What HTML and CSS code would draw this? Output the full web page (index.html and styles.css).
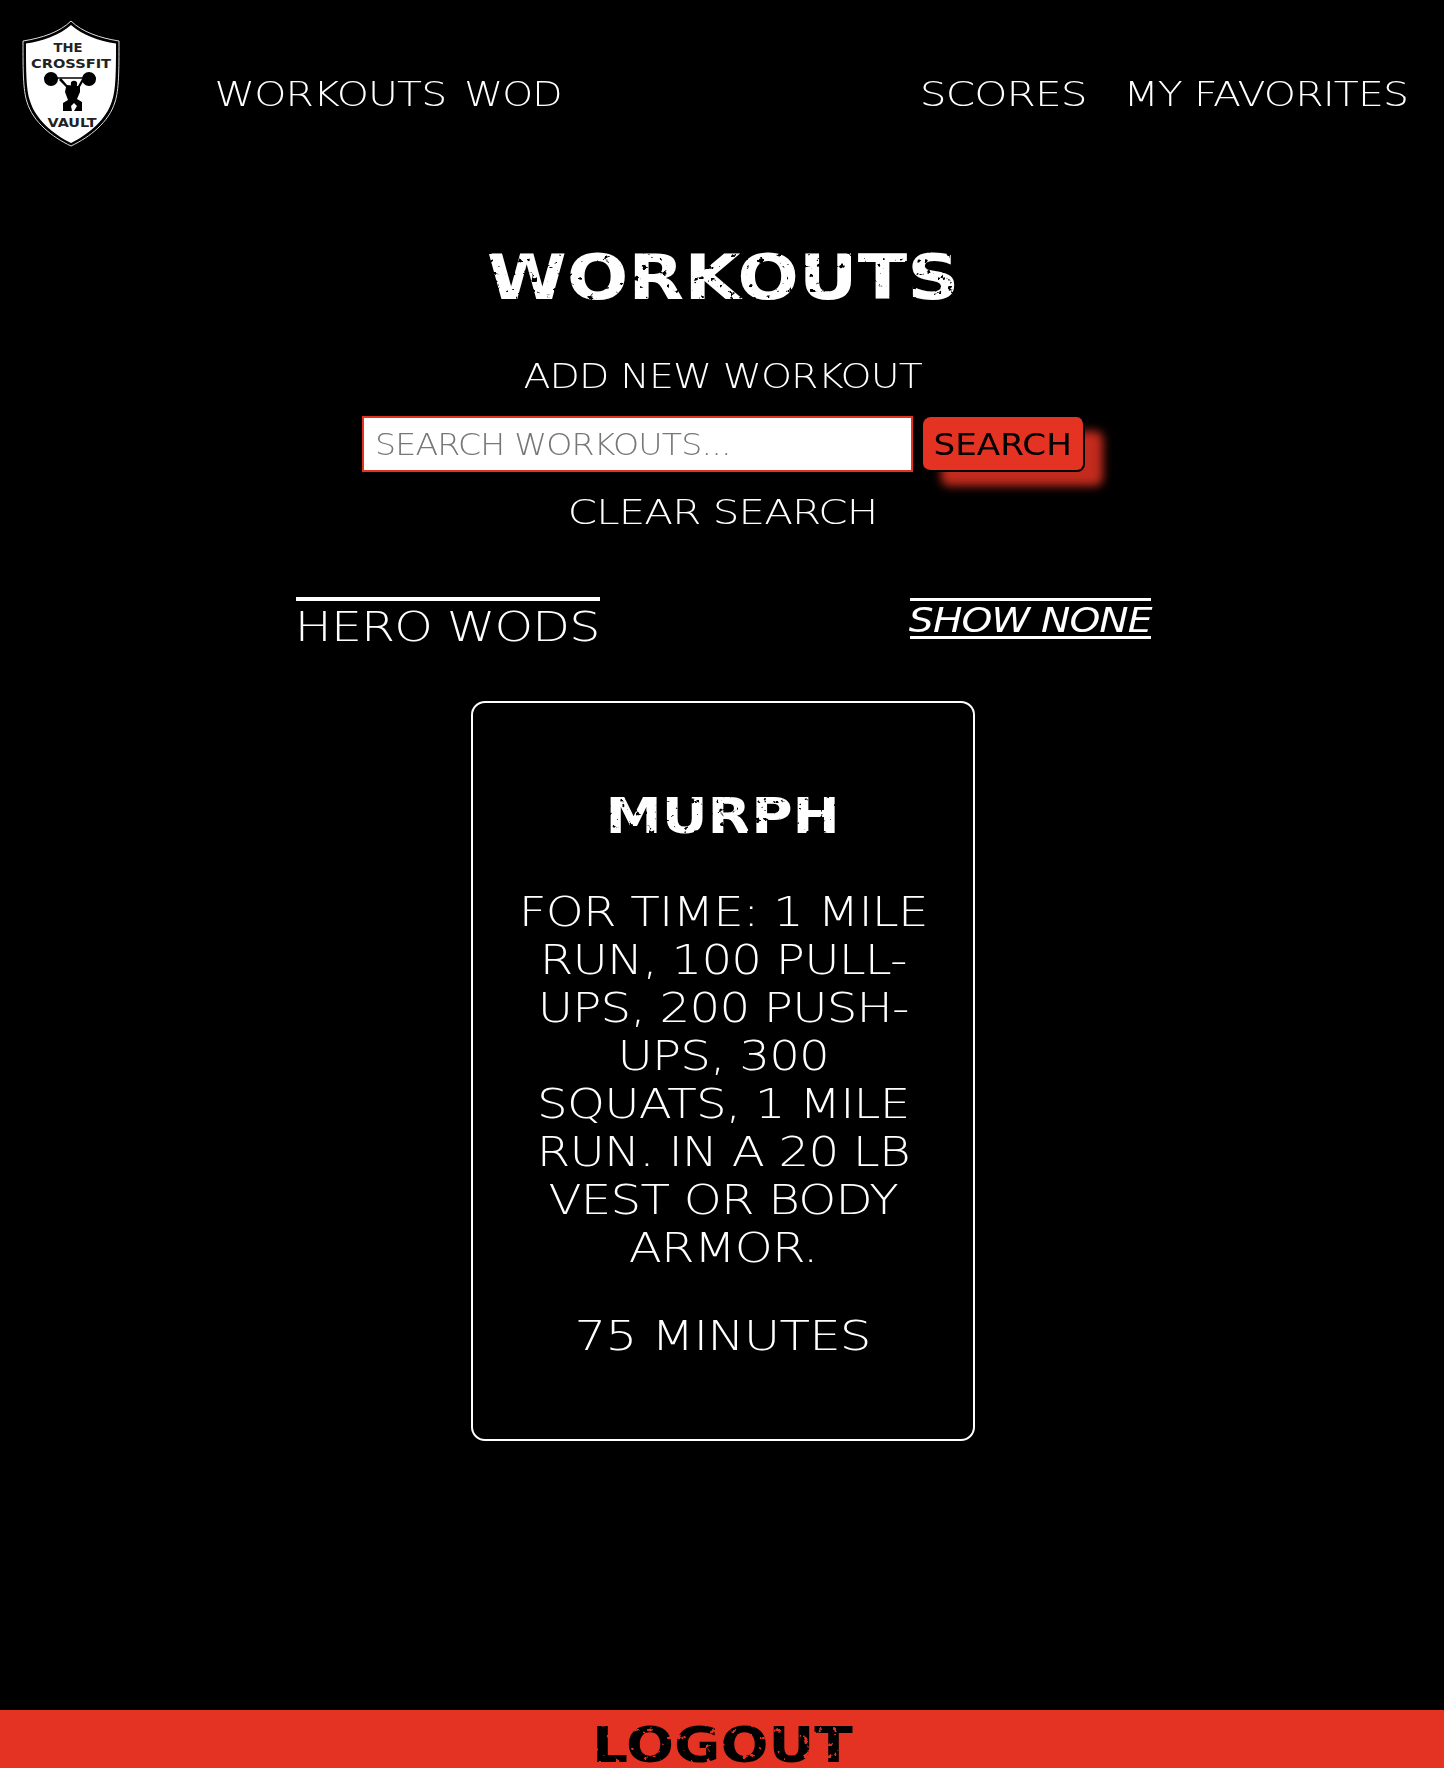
FILE: index.html
```html
<!DOCTYPE html>
<html>
<head>
	<meta charset="utf-8">
	<meta name="viewport" content="width=device-width, initial-scale=1">
	<title>The CrossFit Vault</title>
	<link rel="stylesheet" href="styles.css">
</head>
<body>
	<svg class="filters" width="0" height="0">
		<filter id="distress" x="0" y="0" width="100%" height="100%">
			<feTurbulence type="fractalNoise" baseFrequency="0.16" numOctaves="3" seed="7"/>
			<feColorMatrix values="0 0 0 0 0  0 0 0 0 0  0 0 0 0 0  0 0 0 -14 10.4"/>
			<feComposite in="SourceGraphic" operator="in"/>
		</filter>
	</svg>

	<header class="topbar">
		<svg class="logo" viewBox="0 0 142 165" width="142" height="165">
			<path d="M71 21 C60 32 42 38 23 41 C23 70 23 90 27 102 C33 122 52 137 71 146 C90 137 109 122 115 102 C119 90 119 70 119 41 C100 38 82 32 71 21 Z" fill="#000" stroke="#ddd" stroke-width="1"/>
			<path d="M71 25 C60 35 43 41 26 43.500 C26 70 26 90 30 101 C36 120 53 134 71 143 C89 134 106 120 112 101 C116 90 116 70 116 43.500 C99 41 82 35 71 25 Z" fill="#fff"/>
			<text class="logo-text" x="68" y="52" text-anchor="middle" textLength="29" lengthAdjust="spacingAndGlyphs">THE</text>
			<text class="logo-text" x="71" y="68" text-anchor="middle" textLength="80" lengthAdjust="spacingAndGlyphs">CROSSFIT</text>
			<text class="logo-text" x="72" y="127" text-anchor="middle" textLength="49" lengthAdjust="spacingAndGlyphs">VAULT</text>
			<path d="M44 78 H96" stroke="#000" stroke-width="1.500"/>
			<circle cx="51" cy="79" r="7"/>
			<circle cx="89" cy="79" r="7"/>
			<circle cx="74" cy="84" r="3.200"/>
			<path d="M59 80 L66 87 L65 92 L68 100 L63 103 L63 111 L72 111 L71 106 L74 103 L77 106 L74 111 L82 111 L82 102 L77 99 L80 92 L80 87 L84 80 L82 79 L78 86 L67 85 L61 78 Z"/>
		</svg>
		<nav class="nav-left">
			<a class="nav-link" href="#"><span class="wide">WORKOUTS</span></a>
			<a class="nav-link nav-wod" href="#"><span class="wide">WOD</span></a>
		</nav>
		<nav class="nav-right">
			<a class="nav-link nav-scores" href="#"><span class="wide">SCORES</span></a>
			<a class="nav-link" href="#"><span class="wide">MY FAVORITES</span></a>
		</nav>
	</header>

	<main class="content">
		<h1 class="page-title"><span class="wide-heavy">WORKOUTS</span></h1>
		<a class="add-link" href="#"><span class="wide">ADD NEW WORKOUT</span></a>

		<form class="search-form">
			<div class="search-input"><span class="wide-left">SEARCH WORKOUTS...</span></div>
			<button class="search-btn" type="button"><span class="wide">SEARCH</span></button>
		</form>
		<a class="clear-link" href="#"><span class="wide">CLEAR SEARCH</span></a>

		<div class="filter-row">
			<div class="filter-name"><span class="wide">HERO WODS</span></div>
			<div class="filter-toggle"><span class="wide">SHOW NONE</span></div>
		</div>

		<section class="card">
			<h2 class="card-title"><span class="wide-heavy">MURPH</span></h2>
			<p class="card-desc"><span class="wide">FOR TIME: 1 MILE<br>RUN, 100 PULL-<br>UPS, 200 PUSH-<br>UPS, 300<br>SQUATS, 1 MILE<br>RUN. IN A 20 LB<br>VEST OR BODY<br>ARMOR.</span></p>
			<p class="card-time"><span class="wide">75 MINUTES</span></p>
		</section>
	</main>

	<footer class="logout-bar"><span class="wide-heavy">LOGOUT</span></footer>
</body>
</html>
```
FILE: styles.css
```css
* {
	box-sizing: border-box;
}
html, body {
	margin: 0;
	height: 100%;
}
body {
	min-height: 1768px;
	display: flex;
	flex-direction: column;
	background-color: #000;
	color: #fff;
	font-family: "DejaVu Sans", sans-serif;
	font-weight: 200;
	letter-spacing: -0.045em;
}
a {
	color: #fff;
	text-decoration: none;
}
.filters {
	position: absolute;
}

/* stretched lettering, the installed fonts are all too narrow */
.wide, .wide-heavy, .wide-left {
	display: inline-block;
	transform: scaleX(var(--sx, 1.25));
	white-space: nowrap;
}
.wide-left {
	--sx: 1.106;
	transform-origin: left center;
}
.wide-heavy {
	--sx: 1.13;
	font-weight: 700;
	letter-spacing: 0;
	filter: url(#distress);
}

.topbar {
	display: flex;
	align-items: center;
	height: 186px;
	padding: 4px 64px 0 0;
}
.logo {
	flex: none;
	align-self: flex-start;
	margin-top: -4px;
}
.logo-text {
	font-family: "DejaVu Sans", sans-serif;
	font-size: 12px;
	font-weight: 700;
	letter-spacing: 0;
	fill: #222;
}
.nav-left, .nav-right {
	display: flex;
	align-items: center;
}
.nav-left {
	gap: 48px;
	margin-left: 95px;
}
.nav-right {
	gap: 82px;
	margin-left: auto;
}
.nav-link {
	--sx: 1.24;
	font-size: 33px;
	line-height: 40px;
}
.nav-wod {
	--sx: 1.19;
}
.nav-scores {
	--sx: 1.28;
}

.content {
	display: flex;
	flex-direction: column;
	align-items: center;
	padding-left: 2px;
}
.page-title {
	margin: 47px 0 0;
	font-size: 62px;
	line-height: 90px;
}
.page-title .wide-heavy {
	--sx: 1.17;
}
.add-link {
	--sx: 1.195;
	margin-top: 34px;
	font-size: 33px;
	line-height: 40px;
}
.search-form {
	display: flex;
	align-items: center;
	gap: 10px;
	margin-top: 19px;
}
.search-input {
	width: 551px;
	height: 56px;
	padding-left: 11px;
	border: 2px solid #e53323;
	background-color: #fff;
	color: #777;
	font-size: 30px;
	line-height: 54px;
}
.search-btn {
	--sx: 1.14;
	width: 162px;
	height: 55px;
	padding: 2px 0 0;
	border: 0;
	border-bottom: 2px solid #000;
	border-right: 2px solid #000;
	border-radius: 8px;
	background-color: #e53323;
	box-shadow: 18px 14px 10px rgba(229, 51, 35, 0.85);
	color: #000;
	font-family: inherit;
	font-size: 30px;
	font-weight: 400;
	letter-spacing: 0;
}
.clear-link {
	--sx: 1.273;
	margin-top: 21px;
	font-size: 33px;
	line-height: 40px;
}

.filter-row {
	display: flex;
	justify-content: space-between;
	align-items: flex-start;
	width: 855px;
	margin-top: 64px;
}
.filter-name {
	--sx: 1.198;
	width: 304px;
	padding-top: 4px;
	border-top: 4px solid #fff;
	font-size: 41px;
	line-height: 44px;
	text-align: center;
}
.filter-toggle {
	--sx: 1.187;
	width: 241px;
	height: 41px;
	margin-top: 1px;
	border-top: 3px solid #fff;
	border-bottom: 3px solid #fff;
	font-size: 33px;
	font-style: italic;
	line-height: 39px;
	text-align: center;
}

.card {
	--sx: 1.18;
	width: 504px;
	height: 740px;
	margin-top: 52px;
	padding-top: 83px;
	border: 2px solid #fff;
	border-radius: 14px;
	text-align: center;
}
.card-title {
	margin: 0;
	font-size: 50px;
	line-height: 60px;
}
.card-desc {
	margin: 42px 0 0;
	font-size: 41px;
	line-height: 48px;
}
.card-time {
	--sx: 1.218;
	margin: 40px 0 0;
	font-size: 41px;
	line-height: 48px;
}

.logout-bar {
	height: 58px;
	margin-top: auto;
	padding-top: 12px;
	background-color: #e53323;
	color: #000;
	font-size: 50px;
	line-height: 46px;
	text-align: center;
}
```
